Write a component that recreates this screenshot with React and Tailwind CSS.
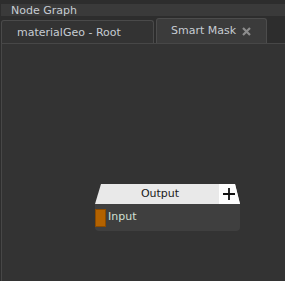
import React from 'react';

function App() {
  return (
    <div className="w-[285px] h-[281px] bg-[#2d2d2d] flex flex-col overflow-hidden text-[#c6ccd2]" style={{ fontFamily: '"DejaVu Sans", Verdana, sans-serif' }}>
      {/* title bar */}
      <div className="mt-[4px] ml-[1px] h-[12px] bg-[#3a3a3a] flex items-center pl-[10px] text-[11px] leading-none">
        Node Graph
      </div>

      {/* tabs */}
      <div className="mt-[2px] h-[25px] flex items-end pl-[1px]">
        <div className="w-[153px] h-[23px] bg-[#333333] border border-b-0 border-[#4a4a4a] rounded-t-[3px] flex items-center pl-[15px] pt-[2px] text-[11px]">
          materialGeo - Root
        </div>
        <div className="ml-[2px] w-[111px] h-[25px] bg-[#3b3b3b] border border-b-0 border-[#4c4c4c] rounded-t-[3px] flex items-center pl-[14px] pt-[1px] text-[11px]">
          Smart Mask
          <svg className="ml-[6px]" width="9" height="9" viewBox="0 0 9 9">
            <path d="M1 1 L8 8 M8 1 L1 8" stroke="#8c8c8c" strokeWidth="2.2" />
          </svg>
        </div>
      </div>

      {/* canvas */}
      <div className="relative flex-1 ml-[1px] bg-[#333333] border-t border-l border-[#474747]">
        <div className="absolute left-[93px] top-[140px] w-[145px]">
          <div
            className="h-[20px] bg-[#e9e9e9] flex items-stretch text-[11px] text-[#1a1a1a]"
            style={{ clipPath: 'polygon(6px 0, 140px 0, 145px 100%, 0 100%)' }}
          >
            <div className="flex-1 flex items-center justify-center pl-[6px]">Output</div>
            <div className="w-[21px] bg-white flex items-center pl-[4px]">
              <svg width="12" height="12" viewBox="0 0 12 12">
                <path d="M6 0 V12 M0 6 H12" stroke="#111" strokeWidth="1.8" />
              </svg>
            </div>
          </div>
          <div className="h-[27px] bg-[#3f3f3f] rounded-b-[4px] flex items-center">
            <div className="w-[11px] h-[18px] bg-[#b36200] border border-[#8a4a00]" />
            <span className="ml-[2px] text-[11px] text-[#d2e0d4]">Input</span>
          </div>
        </div>
      </div>
    </div>
  );
}

export default App;
